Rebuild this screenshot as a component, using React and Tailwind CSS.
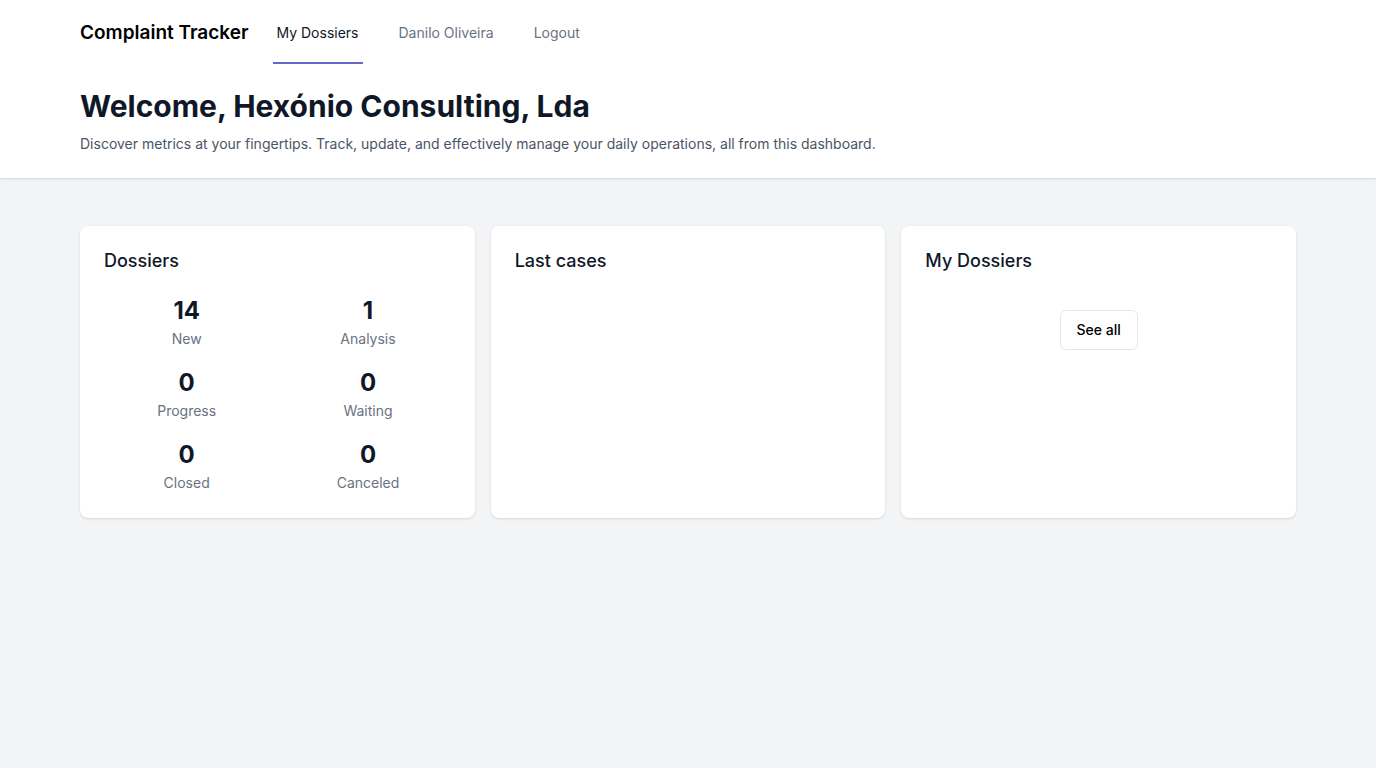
import React from 'react';

const stats = [
  { value: 14, label: 'New' },
  { value: 1, label: 'Analysis' },
  { value: 0, label: 'Progress' },
  { value: 0, label: 'Waiting' },
  { value: 0, label: 'Closed' },
  { value: 0, label: 'Canceled' },
];

const navLinks = [
  { name: 'My Dossiers', active: true },
  { name: 'Danilo Oliveira', active: false },
  { name: 'Logout', active: false },
];

const Card = ({ title, children }) => (
  <div className="rounded-lg bg-white px-6 pt-[21px] pb-[23px] shadow-sm">
    <h3 className="text-lg font-medium leading-7 text-gray-900">{title}</h3>
    {children}
  </div>
);

export default function App() {
  return (
    <div className="min-h-screen bg-gray-100 font-['Inter',sans-serif]">
      <div className="relative bg-white shadow">
        <nav>
          <div className="mx-auto flex h-16 max-w-7xl items-stretch px-8">
            <div className="flex items-center pt-[2px] text-[19px] font-semibold text-black">
              Complaint Tracker
            </div>
            <div className="ml-6 flex space-x-8">
              {navLinks.map((link) => (
                <a
                  key={link.name}
                  href="#"
                  className={`inline-flex items-center border-b-2 px-1 pt-[3px] text-sm ${
                    link.active
                      ? 'border-[#6466c9] text-gray-900'
                      : 'border-transparent text-gray-500'
                  }`}
                >
                  {link.name}
                </a>
              ))}
            </div>
          </div>
        </nav>
        <header className="mx-auto max-w-7xl px-8 pt-6 pb-6">
          <h1 className="text-3xl font-bold text-gray-900">
            Welcome, Hexónio Consulting, Lda
          </h1>
          <p className="mt-2.5 text-sm text-gray-600">
            Discover metrics at your fingertips. Track, update, and effectively manage your daily
            operations, all from this dashboard.
          </p>
        </header>
      </div>

      <main className="mx-auto max-w-7xl px-8 py-12">
        <div className="grid grid-cols-3 gap-4">
          <Card title="Dossiers">
            <div className="mt-5 grid grid-cols-2 gap-4 text-center">
              {stats.map((s) => (
                <div key={s.label}>
                  <p className="text-2xl font-bold text-gray-900">{s.value}</p>
                  <p className="text-sm leading-6 text-gray-500">{s.label}</p>
                </div>
              ))}
            </div>
          </Card>
          <Card title="Last cases" />
          <Card title="My Dossiers">
            <div className="mt-[35px] flex justify-center">
              <button className="rounded-md border border-gray-200 bg-white px-4 py-[9px] text-sm font-medium text-black">
                See all
              </button>
            </div>
          </Card>
        </div>
      </main>
    </div>
  );
}
